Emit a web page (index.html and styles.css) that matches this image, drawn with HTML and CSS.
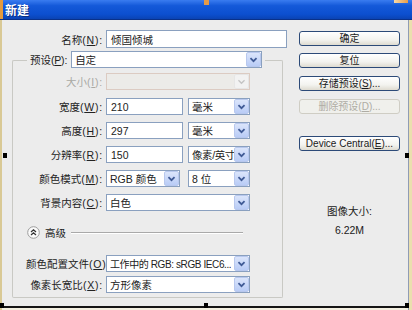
FILE: index.html
```html
<!DOCTYPE html>
<html lang="zh-CN">
<head>
<meta charset="utf-8">
<title>新建</title>
<link rel="stylesheet" href="styles.css">
</head>
<body>
<div class="window">
  <div class="titlebar"><span class="title">新建</span></div>
  <div class="content">
    <div class="form">
      <div class="field name-row">
        <label class="lbl">名称<span class="key">(<u>N</u>):</span></label>
        <div class="input">倾国倾城</div>
      </div>
      <div class="group">
        <div class="group-head">
          <span class="edge edge-l"></span>
          <label class="lbl preset-lbl">预设<span class="key">(<u>P</u>):</span></label>
          <div class="select preset-select"><span class="val">自定</span><span class="arrow"><svg width="15" height="15" viewBox="0 0 15 15"><path d="M4 6 L7.5 9.5 L11 6" fill="none" stroke="#3f5a95" stroke-width="2"/></svg></span></div>
          <span class="edge edge-r"></span>
        </div>
        <div class="rows">
          <div class="field row first">
            <label class="lbl disabled">大小<span class="key">(<u>I</u>):</span></label>
            <div class="select is-disabled"><span class="val"></span><span class="arrow"><svg width="15" height="15" viewBox="0 0 15 15"><path d="M4 6 L7.5 9.5 L11 6" fill="none" stroke="#c4c4c4" stroke-width="1.5"/></svg></span></div>
          </div>
          <div class="field row">
            <label class="lbl">宽度<span class="key">(<u>W</u>):</span></label>
            <div class="pair">
              <div class="input num">210</div>
              <div class="select unit"><span class="val">毫米</span><span class="arrow"><svg width="15" height="15" viewBox="0 0 15 15"><path d="M4 6 L7.5 9.5 L11 6" fill="none" stroke="#3f5a95" stroke-width="2"/></svg></span></div>
            </div>
          </div>
          <div class="field row">
            <label class="lbl">高度<span class="key">(<u>H</u>):</span></label>
            <div class="pair">
              <div class="input num">297</div>
              <div class="select unit"><span class="val">毫米</span><span class="arrow"><svg width="15" height="15" viewBox="0 0 15 15"><path d="M4 6 L7.5 9.5 L11 6" fill="none" stroke="#3f5a95" stroke-width="2"/></svg></span></div>
            </div>
          </div>
          <div class="field row">
            <label class="lbl">分辨率<span class="key">(<u>R</u>):</span></label>
            <div class="pair">
              <div class="input num">150</div>
              <div class="select unit"><span class="val tight">像素/英寸</span><span class="arrow"><svg width="15" height="15" viewBox="0 0 15 15"><path d="M4 6 L7.5 9.5 L11 6" fill="none" stroke="#3f5a95" stroke-width="2"/></svg></span></div>
            </div>
          </div>
          <div class="field row">
            <label class="lbl">颜色模式<span class="key">(<u>M</u>):</span></label>
            <div class="pair wide-gap">
              <div class="select mode"><span class="val">RGB 颜色</span><span class="arrow"><svg width="15" height="15" viewBox="0 0 15 15"><path d="M4 6 L7.5 9.5 L11 6" fill="none" stroke="#3f5a95" stroke-width="2"/></svg></span></div>
              <div class="select unit"><span class="val">8 位</span><span class="arrow"><svg width="15" height="15" viewBox="0 0 15 15"><path d="M4 6 L7.5 9.5 L11 6" fill="none" stroke="#3f5a95" stroke-width="2"/></svg></span></div>
            </div>
          </div>
          <div class="field row">
            <label class="lbl">背景内容<span class="key">(<u>C</u>):</span></label>
            <div class="select"><span class="val">白色</span><span class="arrow"><svg width="15" height="15" viewBox="0 0 15 15"><path d="M4 6 L7.5 9.5 L11 6" fill="none" stroke="#3f5a95" stroke-width="2"/></svg></span></div>
          </div>
          <div class="advanced">
            <span class="adv-icon"><svg width="13" height="13" viewBox="0 0 13 13"><circle cx="6.5" cy="6.5" r="5.8" fill="#fbfbfb" stroke="#9c9c9c" stroke-width="1"/><path d="M4 6 L6.5 3.8 L9 6 M4 9 L6.5 6.8 L9 9" fill="none" stroke="#333" stroke-width="1.3"/></svg></span>
            <span class="adv-text">高级</span>
            <span class="adv-line"></span>
          </div>
          <div class="field row profile">
            <label class="lbl">颜色配置文件<span class="key">(<u>O</u>):</span></label>
            <div class="select"><span class="val squeeze">工作中的 RGB: sRGB IEC6...</span><span class="arrow"><svg width="15" height="15" viewBox="0 0 15 15"><path d="M4 6 L7.5 9.5 L11 6" fill="none" stroke="#3f5a95" stroke-width="2"/></svg></span></div>
          </div>
          <div class="field row aspect">
            <label class="lbl">像素长宽比<span class="key">(<u>X</u>):</span></label>
            <div class="select"><span class="val">方形像素</span><span class="arrow"><svg width="15" height="15" viewBox="0 0 15 15"><path d="M4 6 L7.5 9.5 L11 6" fill="none" stroke="#3f5a95" stroke-width="2"/></svg></span></div>
          </div>
        </div>
      </div>
    </div>
    <div class="side">
      <button class="btn b-ok">确定</button>
      <button class="btn b-reset">复位</button>
      <button class="btn b-save">存储预设(<u>S</u>)...</button>
      <button class="btn b-del" disabled>删除预设(<u>D</u>)...</button>
      <button class="btn b-dc">Device Central(<u>E</u>)...</button>
      <div class="size-label">图像大小:</div>
      <div class="size-value">6.22M</div>
    </div>
  </div>
  <span class="handle h-l"></span>
  <span class="handle h-r"></span>
  <span class="handle h-bl"></span>
  <span class="handle h-bm"></span>
  <span class="handle h-br"></span>
  <span class="handle h-tm"></span>
  <span class="handle h-tr"></span>
</div>
</body>
</html>
```
FILE: styles.css
```css
html, body { margin: 0; padding: 0; }
body {
  font-family: "Liberation Sans", "Noto Sans CJK SC", sans-serif;
  font-size: 10.5px;
  color: #1a1a1a;
  background: #fff;
}
.window {
  position: relative;
  width: 412px;
  height: 310px;
  overflow: hidden;
  background: #ececec;
  box-shadow: inset 2px 0 0 #d9c995, inset -3px 0 0 #eadfae, inset -4px 0 0 #8f9cb5, inset 0 -2px 0 #f3efe0, inset 0 -4px 0 #151515;
}
.titlebar {
  height: 20px;
  background: linear-gradient(#3a7cf0 0%, #1459d9 30%, #0c4fcf 75%, #0a43b4 100%);
  border-bottom: 1px solid #0a3189;
  box-sizing: border-box;
  display: flex;
  align-items: center;
  padding-left: 5px;
  box-shadow: inset 3px 0 0 #e39a3e;
}
.title {
  color: #fff;
  font-family: "Noto Sans CJK SC", sans-serif;
  font-weight: bold;
  font-size: 12px;
  text-shadow: 1px 1px 0 #0b2f80;
}
.content {
  display: flex;
  padding-top: 10px;
}
.form { width: 290px; flex: none; }
.side {
  width: 101px;
  flex: none;
  margin-left: 9px;
  display: flex;
  flex-direction: column;
  align-items: stretch;
}
.field {
  display: grid;
  align-items: center;
  column-gap: 3px;
}
.name-row { grid-template-columns: 103px 181px; height: 18px; }
.lbl {
  text-align: right;
  white-space: nowrap;
  color: #222;
}
.key { letter-spacing: 0.8px; }
.lbl.disabled { color: #a9a9a4; }
.input {
  box-sizing: border-box;
  height: 100%;
  background: #fff;
  border: 1px solid #8aa0bf;
  display: flex;
  align-items: center;
  padding-left: 4px;
  color: #222;
  white-space: nowrap;
}
.name-row .input { height: 18px; }

.group {
  margin: 3px 0 0 12px;
  width: 271px;
}
.group-head {
  display: flex;
  align-items: center;
  height: 17px;
  width: 271px;
}
.edge {
  flex: none;
  align-self: flex-end;
  height: 8px;
  box-sizing: border-box;
  border-top: 1px solid #c9c9c4;
}
.edge-l { width: 15px; border-left: 1px solid #c9c9c4; border-top-left-radius: 2px; margin-right: 3px; }
.edge-r { width: 18px; border-right: 1px solid #c9c9c4; border-top-right-radius: 2px; margin-left: 3px; }
.preset-lbl { flex: none; margin-right: 4px; }
.preset-lbl .key { letter-spacing: -0.2px; }
.rows {
  display: flex;
  flex-direction: column;
  gap: 7px;
  padding: 5px 0 4px 13px;
  border: 1px solid #c9c9c4;
  border-top: 0;
  border-radius: 0 0 2px 2px;
}

.select {
  box-sizing: border-box;
  height: 17px;
  background: #fff;
  border: 1px solid #8aa0bf;
  display: flex;
  align-items: center;
  justify-content: space-between;
  padding-left: 3px;
  white-space: nowrap;
  overflow: hidden;
  color: #222;
}
.preset-select { flex: 1; min-width: 0; }
.select .val { overflow: hidden; }
.select .val.tight { letter-spacing: -0.4px; }
.select .val.squeeze { font-size: 10px; letter-spacing: -0.4px; }
.select .arrow {
  flex: none;
  width: 15px;
  height: 15px;
  box-sizing: border-box;
  border: 1px solid #b8c8ee;
  border-radius: 2px;
  background: linear-gradient(#dbe5fb, #b9ccf6);
  display: flex;
  align-items: center;
  justify-content: center;
}
.select .arrow svg { display: block; }
.select.is-disabled {
  background: #ecebe8;
  border-color: #dccbc2;
}
.select.is-disabled .arrow {
  border-color: #e6e6e6;
  background: #f2f2f2;
}
.row { grid-template-columns: 77px 144px; height: 17px; }
.row.first { margin-bottom: 1px; }
.pair { display: flex; gap: 5px; height: 17px; }
.pair.wide-gap { gap: 8px; }
.pair .num { width: 77px; height: 17px; }
.pair .unit { width: 62px; }
.pair .mode { width: 74px; }
.advanced {
  display: flex;
  align-items: center;
  height: 14px;
  margin-top: 7px;
  padding-left: 1px;
  margin-right: 39px;
}
.adv-icon { display: flex; width: 13px; height: 13px; }
.adv-text { margin-left: 5px; color: #222; }
.adv-line {
  flex: 1;
  margin-left: 5px;
  height: 1px;
  background: #a9a9a9;
  box-shadow: 0 1px 0 #fff;
}
.row.profile { margin-top: 9px; }
.row.aspect { margin-top: -3px; }
.btn {
  box-sizing: border-box;
  height: 15px;
  padding: 0;
  border: 1px solid #2c4a78;
  border-radius: 3px;
  background: linear-gradient(#ffffff, #f3f3ef 60%, #dedbd0);
  font-family: "Liberation Sans", "Noto Sans CJK SC", sans-serif;
  font-size: 10px;
  color: #1a1a1a;
  line-height: 13px;
  white-space: nowrap;
}
.btn:disabled {
  border-color: #cfcdc4;
  background: #f0f0ec;
  color: #aeaca4;
}
.b-ok { margin-top: 1px; }
.b-reset { margin-top: 7px; }
.b-save { margin-top: 8px; }
.b-del { margin-top: 8px; }
.b-dc { margin-top: 22px; }
.size-label {
  margin-top: 53px;
  text-align: center;
  line-height: 14px;
  color: #222;
}
.size-value {
  margin-top: 5px;
  text-align: center;
  line-height: 14px;
  color: #222;
}
.handle {
  position: absolute;
  width: 4px;
  height: 5px;
  background: #000;
}
.h-l { left: 3px; top: 153px; }
.h-r { left: 405px; top: 153px; }
.h-bl { left: 0; top: 303px; }
.h-bm { left: 204px; top: 303px; }
.h-br { left: 405px; top: 303px; }
.h-tm { left: 204px; top: 0; width: 5px; background: #e59a48; }
.h-tr { left: 394px; top: 0; width: 14px; height: 3px; background: linear-gradient(90deg, #f7d9a8, #e79c4a); }
```
